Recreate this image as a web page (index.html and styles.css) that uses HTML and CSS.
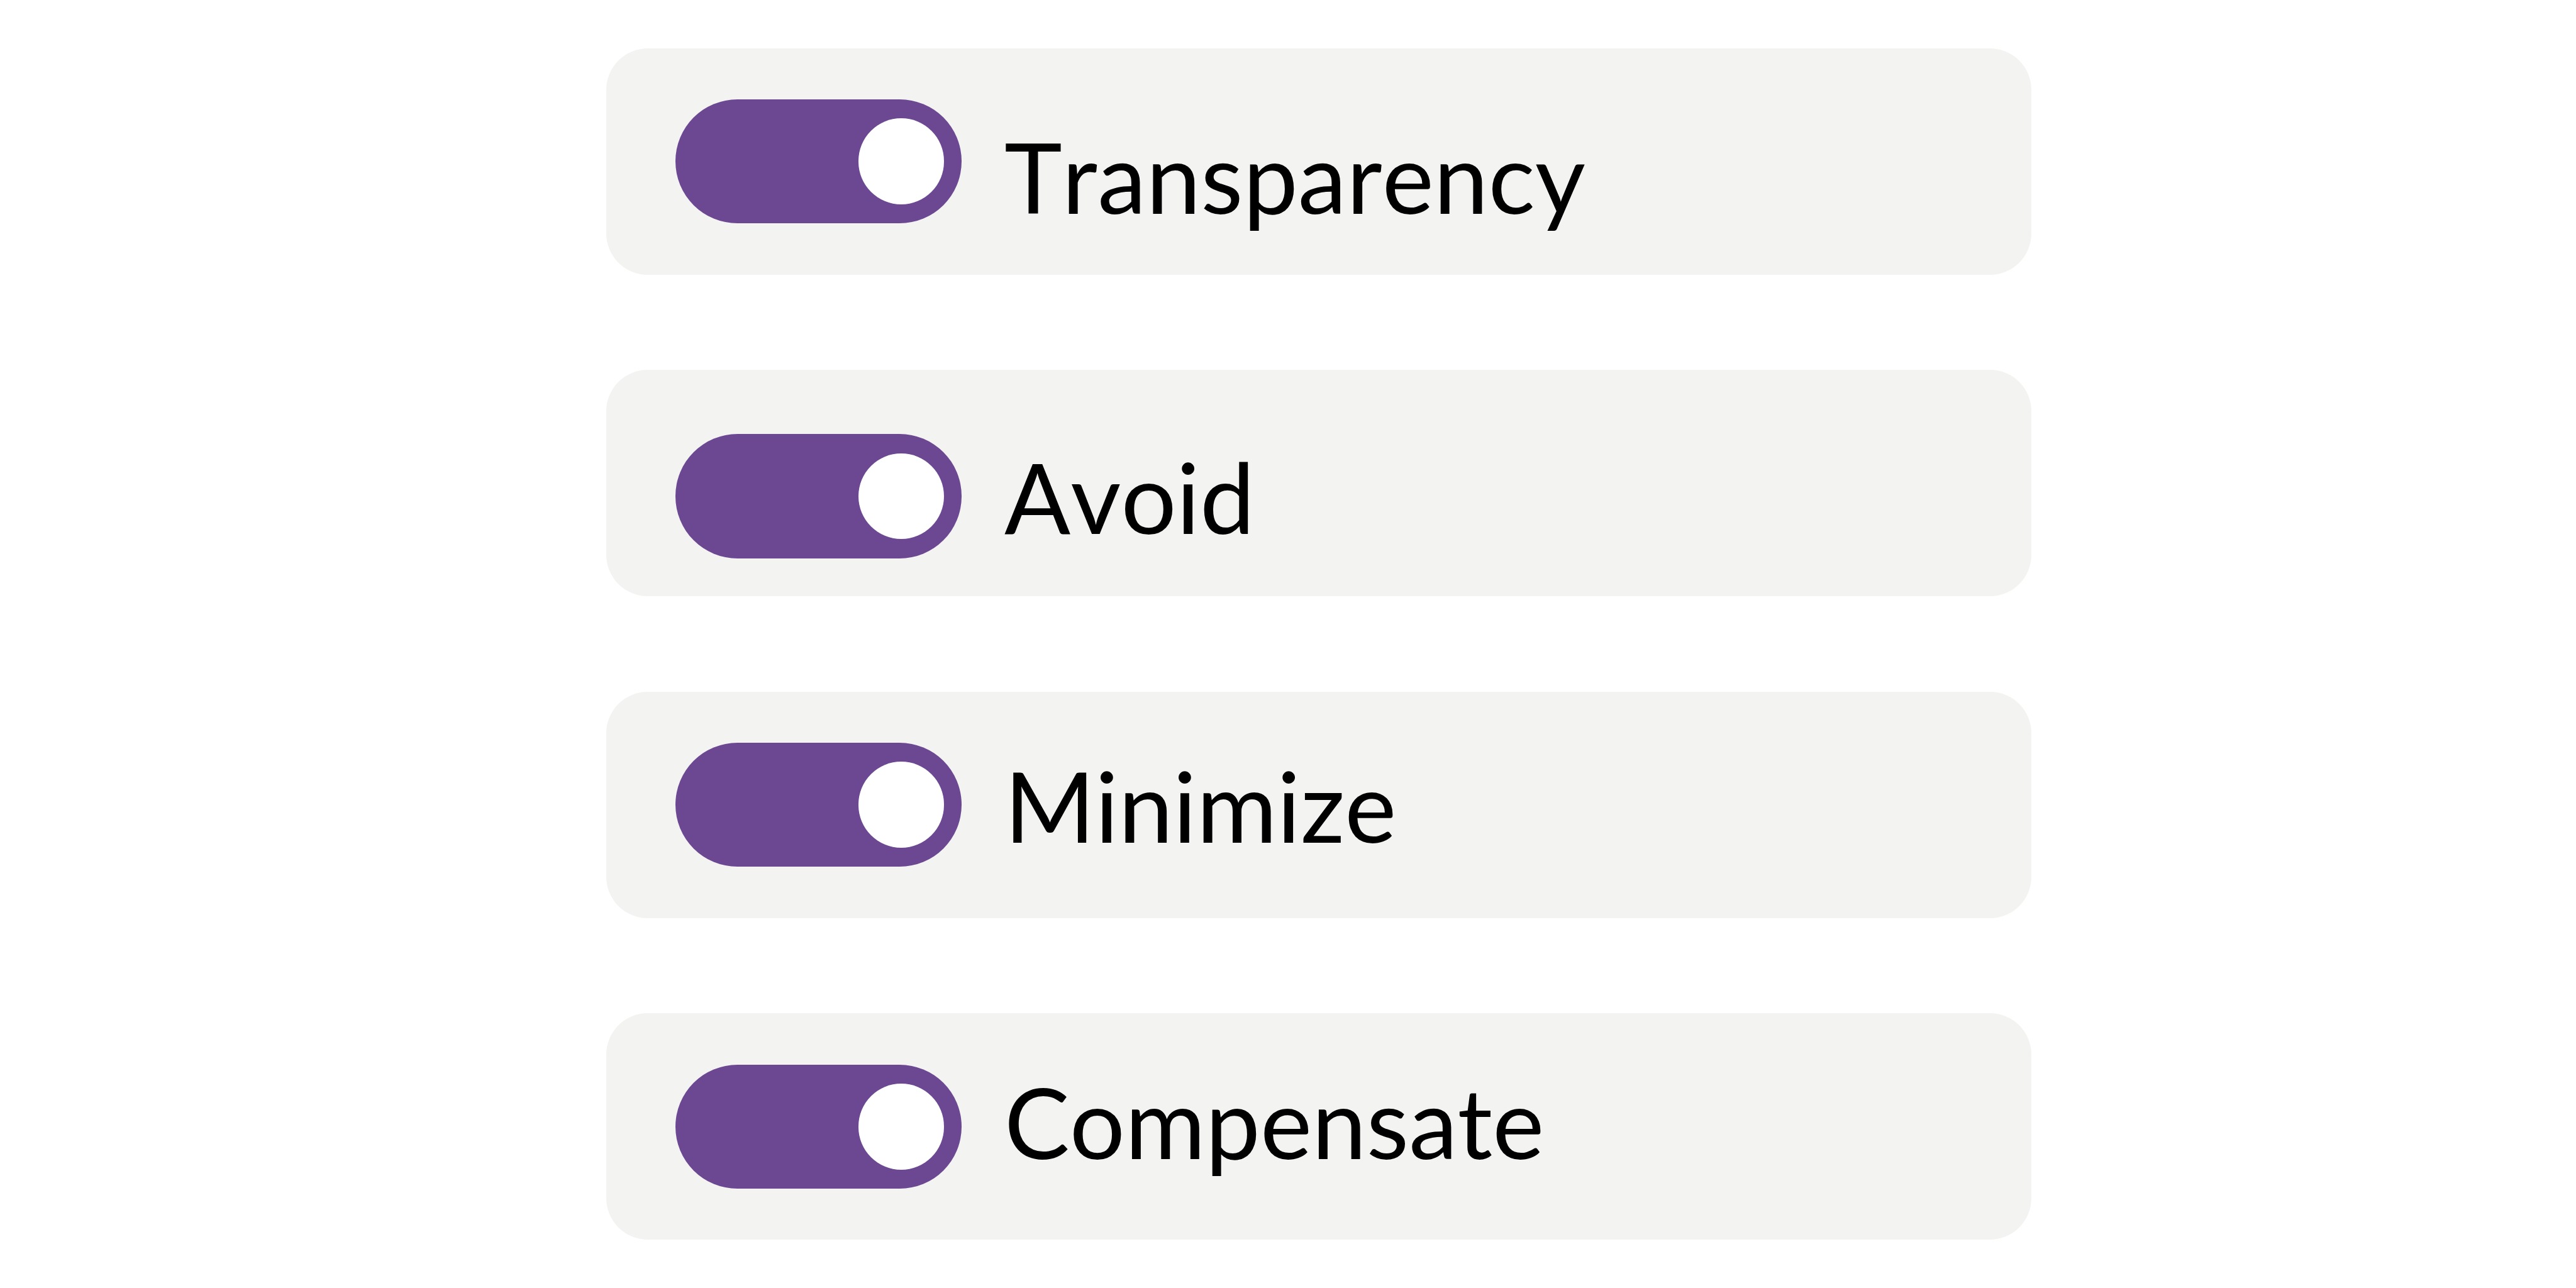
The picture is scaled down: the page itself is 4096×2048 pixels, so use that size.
FILE: index.html
```html
<!DOCTYPE html>
<html lang="en">
<head>
    <meta charset="UTF-8">
    <meta name="viewport" content="width=device-width, initial-scale=1.0">
    <title>Settings</title>
    <link rel="stylesheet" href="styles.css">
</head>
<body>
    <main class="options">
        <div class="option transparency">
            <div class="toggle" role="switch" aria-checked="true" aria-labelledby="transparency"><span class="knob"></span></div>
            <span class="label" id="transparency">Transparency</span>
        </div>
        <div class="option avoid">
            <div class="toggle" role="switch" aria-checked="true" aria-labelledby="avoid"><span class="knob"></span></div>
            <span class="label" id="avoid">Avoid</span>
        </div>
        <div class="option minimize">
            <div class="toggle" role="switch" aria-checked="true" aria-labelledby="minimize"><span class="knob"></span></div>
            <span class="label" id="minimize">Minimize</span>
        </div>
        <div class="option compensate">
            <div class="toggle" role="switch" aria-checked="true" aria-labelledby="compensate"><span class="knob"></span></div>
            <span class="label" id="compensate">Compensate</span>
        </div>
    </main>
</body>
</html>
```

FILE: styles.css
```css
* {
    box-sizing: border-box;
}
body {
    margin: 0;
    background: #ffffff;
    font-family: Lato, "Open Sans", sans-serif;
    color: #000000;
}
.options {
    display: flex;
    flex-direction: column;
    gap: 151.5px;
    width: 2266.3px;
    margin-left: 964px;
    padding-top: 76.5px;
}
.option {
    display: flex;
    align-items: flex-start;
    gap: 67.5px;
    height: 360px;
    padding-left: 110.4px;
    border-radius: 66px;
    background: #f3f3f1;
}
.toggle {
    display: flex;
    flex: none;
    align-items: center;
    justify-content: flex-end;
    width: 455px;
    height: 197.4px;
    margin-top: 81.4px;
    padding-right: 28.3px;
    border-radius: 98.7px;
    background: #6c4893;
}
.knob {
    width: 136.4px;
    height: 136.4px;
    border-radius: 50%;
    background: #ffffff;
}
.label {
    font-size: 155.5px;
    font-kerning: none;
    line-height: 1;
    white-space: nowrap;
}

/* vertical position of each row's content */
.transparency .label {
    margin-top: 126px;
}
.avoid .toggle {
    margin-top: 102.4px;
}
.avoid .label {
    margin-top: 124px;
}
.minimize .label {
    margin-top: 103px;
}
.compensate .toggle {
    margin-top: 81.7px;
}
.compensate .label {
    margin-top: 95.3px;
}
```
